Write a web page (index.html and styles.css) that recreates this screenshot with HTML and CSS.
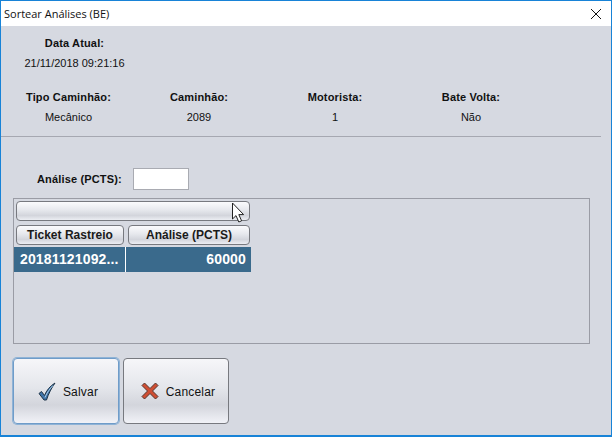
FILE: index.html
```html
<!DOCTYPE html>
<html lang="pt-BR">
<head>
  <meta charset="UTF-8" />
  <title>Sortear Análises (BE)</title>
  <link rel="stylesheet" href="styles.css">
</head>
<body>
  <div class="window">
    <header class="titlebar">
      <span class="title">Sortear Análises (BE)</span>
      <svg class="close-icon" width="12" height="12" viewBox="0 0 12 12">
        <path d="M1 1L11 11M11 1L1 11" stroke="#111" stroke-width="1" fill="none"/>
      </svg>
    </header>
    <div class="content">
      <div class="date-block">
        <div class="label">Data Atual:</div>
        <div class="value">21/11/2018 09:21:16</div>
      </div>
      <div class="info-grid">
        <div class="label">Tipo Caminhão:</div>
        <div class="label">Caminhão:</div>
        <div class="label">Motorista:</div>
        <div class="label">Bate Volta:</div>
        <div class="value">Mecânico</div>
        <div class="value">2089</div>
        <div class="value">1</div>
        <div class="value">Não</div>
      </div>
      <div class="separator"></div>
      <div class="input-row">
        <label class="label input-label">Análise (PCTS):</label>
        <div class="text-input"></div>
      </div>
      <div class="table-panel">
        <div class="jbutton wide-button"></div>
        <div class="table-head">
          <div class="jbutton col-ticket">Ticket Rastreio</div>
          <div class="jbutton col-analise">Análise (PCTS)</div>
        </div>
        <div class="table-row">
          <div class="cell col-ticket-cell">20181121092...</div>
          <div class="cell col-analise-cell">60000</div>
        </div>
        <svg class="cursor" width="16" height="22" viewBox="0 0 16 22">
          <path d="M1.5 1V17L5 13.6L7.8 20L10.6 18.8L7.8 12.6H12.6Z" fill="#fff" stroke="#222" stroke-width="1"/>
        </svg>
      </div>
      <div class="actions">
        <div class="big-button focused">
          <svg width="18" height="19" viewBox="0 0 18 19">
            <path d="M1 11.5L3.5 9.5L6.5 13.5C8.5 8.5 12 4 17 1C13.5 6 10.5 11.5 8.5 18L6 18Z" fill="#3f74a8" stroke="#1d3246" stroke-width="1" stroke-linejoin="round"/>
            <path d="M7 15.5C9 10.5 12 6.5 15 3.5" stroke="#a9cbe8" stroke-width="1" fill="none"/>
          </svg>
          <span>Salvar</span>
        </div>
        <div class="big-button">
          <svg width="18" height="18" viewBox="0 0 18 18">
            <path d="M3.5 1L9 6.5L14.5 1L17 3.5L11.5 9L17 14.5L14.5 17L9 11.5L3.5 17L1 14.5L6.5 9L1 3.5Z" fill="#cf4e33" stroke="#55352e" stroke-width="1" stroke-linejoin="round"/>
          </svg>
          <span>Cancelar</span>
        </div>
      </div>
    </div>
  </div>
</body>
</html>
```

FILE: styles.css
```css
body {
  margin: 0;
  font-family: "Liberation Sans", Arial, sans-serif;
  overflow: hidden;
}
.window {
  width: 612px;
  height: 437px;
  box-sizing: border-box;
  border: 1px solid #1883d7;
  border-bottom-width: 2px;
  display: flex;
  flex-direction: column;
  background: #d6d9e1;
}
.titlebar {
  height: 25px;
  flex: none;
  background: #fff;
  display: flex;
  align-items: center;
  justify-content: space-between;
  padding: 0 9px 0 3px;
}
.title {
  font-family: "Open Sans", sans-serif;
  font-size: 11px;
  color: #111;
}
.content {
  flex: 1;
  color: #111;
}
.label {
  font-size: 11px;
  font-weight: bold;
  line-height: 13px;
  letter-spacing: 0.15px;
  text-align: center;
}
.value {
  font-size: 11px;
  line-height: 13px;
  text-align: center;
}
.date-block {
  width: 147px;
  padding-top: 11px;
}
.date-block .value {
  margin-top: 7px;
}
.info-grid {
  display: grid;
  grid-template-columns: 135px 126px 146px 126px;
  grid-template-rows: 13px 13px;
  row-gap: 7px;
  margin-top: 21px;
}
.separator {
  height: 1px;
  width: 600px;
  background: #a6a8b1;
  margin-top: 12px;
}
.input-row {
  display: flex;
  align-items: center;
  margin-top: 31px;
  padding-left: 36px;
}
.input-label {
  width: 96px;
  text-align: left;
}
.text-input {
  width: 54px;
  height: 20px;
  background: #fff;
  border: 1px solid #a9abb2;
}
.table-panel {
  position: relative;
  box-sizing: border-box;
  width: 577px;
  height: 146px;
  margin: 8px 0 0 12px;
  border: 1px solid #9a9ca5;
  padding: 2px 0 0 2px;
}
.jbutton {
  box-sizing: border-box;
  border: 1px solid #77797f;
  border-radius: 4px;
  background: linear-gradient(#fbfbfd, #e6e8ed 45%, #d3d5dc 75%, #eceef3);
  font-size: 12px;
  font-weight: bold;
  color: #1a1a1a;
  text-align: center;
}
.wide-button {
  width: 234px;
  height: 20px;
}
.table-head {
  display: flex;
  gap: 4px;
  margin-top: 4px;
}
.table-head .jbutton {
  height: 20px;
  line-height: 18px;
}
.col-ticket {
  width: 108px;
}
.col-analise {
  width: 122px;
}
.table-row {
  display: flex;
  margin: 2px 0 0 -2px;
  width: 237px;
  height: 25px;
  background: #3a6a8c;
}
.cell {
  box-sizing: border-box;
  font-size: 14px;
  font-weight: bold;
  line-height: 25px;
  letter-spacing: 0.15px;
  color: #fff;
  padding: 0 5px 0 6px;
  white-space: nowrap;
}
.col-ticket-cell {
  width: 112px;
  border-right: 1px solid #fff;
}
.col-analise-cell {
  flex: 1;
  text-align: right;
}
.cursor {
  position: absolute;
  left: 217px;
  top: 3px;
}
.actions {
  display: flex;
  gap: 4px;
  margin: 14px 0 0 12px;
}
.big-button {
  box-sizing: border-box;
  width: 106px;
  height: 66px;
  border: 1px solid #77797f;
  border-radius: 4px;
  background: linear-gradient(#f6f6f9, #e4e6eb 45%, #d3d5dc 72%, #f1f2f7);
  display: flex;
  align-items: center;
  justify-content: center;
  gap: 7px;
  padding-left: 4px;
  font-size: 12px;
  letter-spacing: 0.2px;
  color: #111;
}
.big-button span {
  margin-top: 2px;
}
.big-button.focused {
  border-color: #6f9cc9;
  box-shadow: 0 0 0 1px #8fb3d6;
}
```
